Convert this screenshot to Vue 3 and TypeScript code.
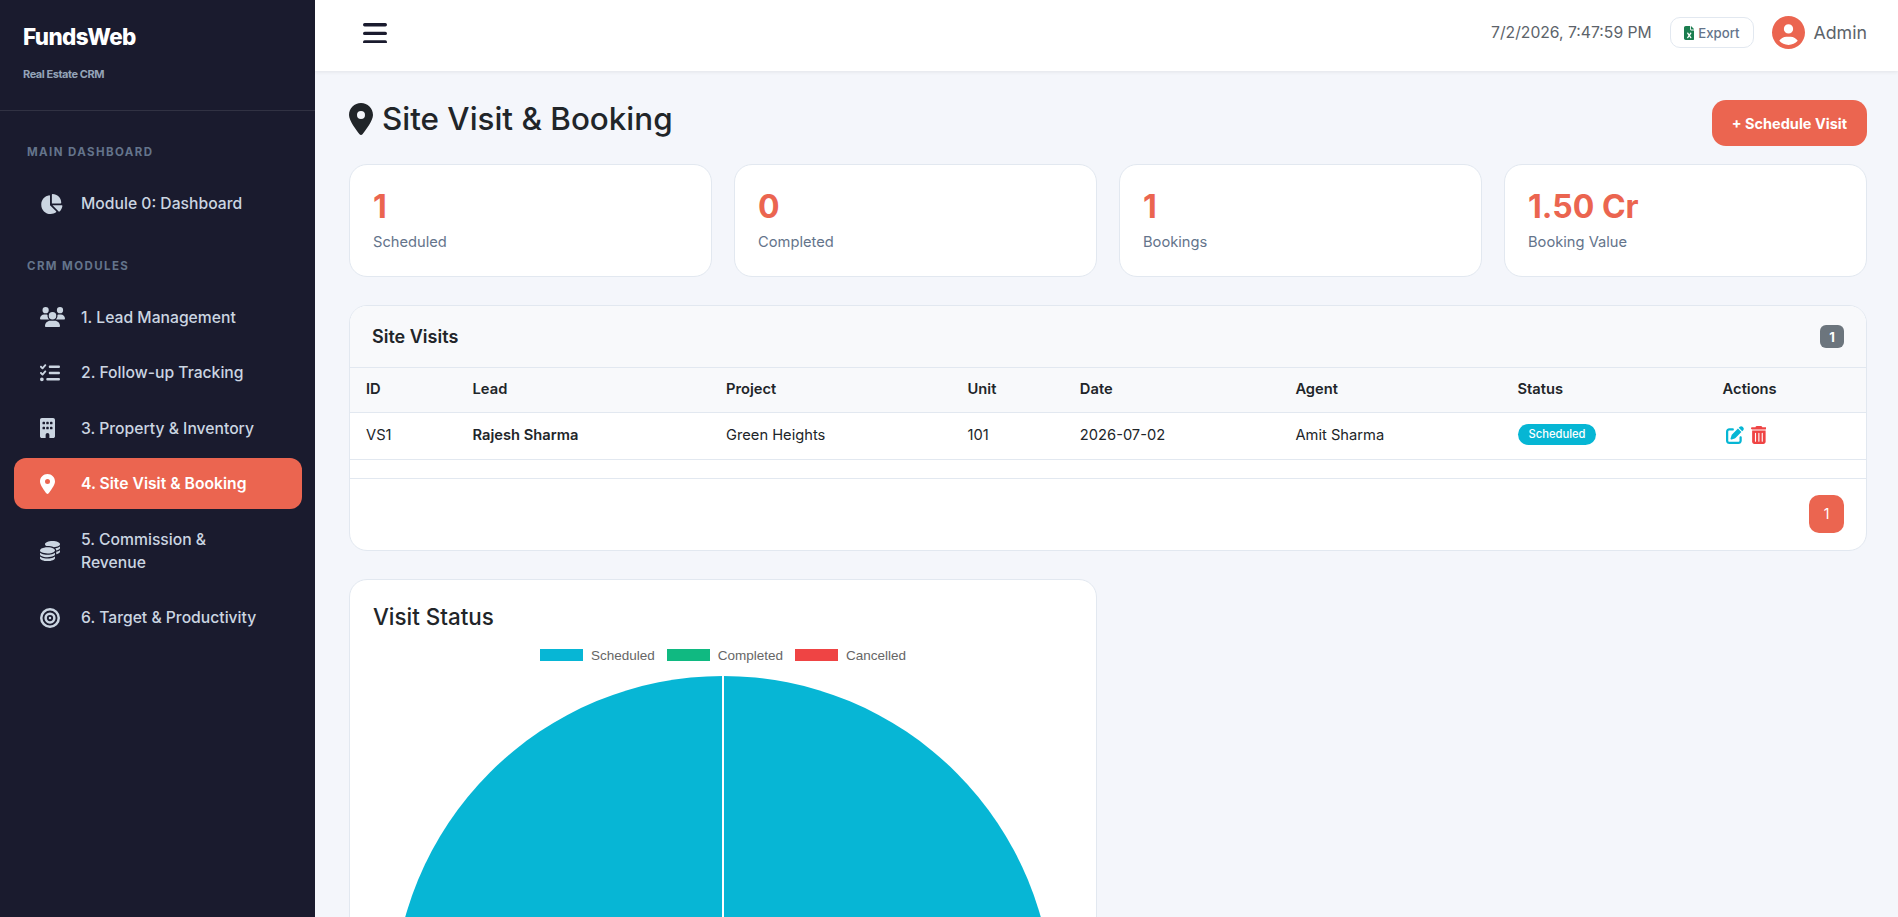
<template>
  <div class="app">
    <aside class="sidebar">
      <div class="brand">
        <div class="brand-name">FundsWeb</div>
        <div class="brand-sub">Real Estate CRM</div>
      </div>
      <nav class="nav">
        <template v-for="group in navGroups" :key="group.label">
          <div class="nav-label">{{ group.label }}</div>
          <a v-for="item in group.items" :key="item.text" class="nav-item" :class="{ active: item.active }">
            <span class="nav-icon">
              <svg :viewBox="`0 0 ${icons[item.icon].w} 512`" height="20" fill="currentColor"><path :d="icons[item.icon].d" /></svg>
            </span>
            <span class="nav-text">{{ item.text }}</span>
          </a>
        </template>
      </nav>
    </aside>

    <div class="main">
      <header class="topbar">
        <button class="menu-btn" aria-label="Toggle menu">
          <svg viewBox="0 0 24 20" width="24" height="20" fill="none" stroke="currentColor" stroke-width="3.4" stroke-linecap="round">
            <path d="M1.7 1.8h20.6M1.7 10.4h20.6M1.7 19h20.6" />
          </svg>
        </button>
        <div class="topbar-right">
          <span class="clock">7/2/2026, 7:47:59 PM</span>
          <button class="export-btn">
            <svg :viewBox="`0 0 ${icons.excel.w} 512`" height="14" fill="#1b7d4f"><path :d="icons.excel.d" /></svg>
            Export
          </button>
          <svg class="avatar" :viewBox="`0 0 ${icons.user.w} 512`" width="33" height="33" fill="#eb6550"><path :d="icons.user.d" /></svg>
          <span class="admin">Admin</span>
        </div>
      </header>

      <main class="content">
        <div class="page-head">
          <h2>
            <svg :viewBox="`0 0 ${icons.pin.w} 512`" height="32" fill="currentColor"><path :d="icons.pin.d" /></svg>
            Site Visit &amp; Booking
          </h2>
          <button class="primary-btn">+ Schedule Visit</button>
        </div>

        <div class="stats">
          <div v-for="stat in stats" :key="stat.label" class="stat-card">
            <div class="stat-value">{{ stat.value }}</div>
            <div class="stat-label">{{ stat.label }}</div>
          </div>
        </div>

        <section class="table-card">
          <div class="table-head">
            <h5>Site Visits</h5>
            <span class="count">1</span>
          </div>
          <table>
            <colgroup>
              <col v-for="w in colWidths" :key="w" :style="{ width: w + '%' }" />
            </colgroup>
            <thead>
              <tr>
                <th v-for="col in columns" :key="col">{{ col }}</th>
              </tr>
            </thead>
            <tbody>
              <tr>
                <td>VS1</td>
                <td><strong>Rajesh Sharma</strong></td>
                <td>Green Heights</td>
                <td>101</td>
                <td>2026-07-02</td>
                <td>Amit Sharma</td>
                <td><span class="pill">Scheduled</span></td>
                <td>
                  <span class="actions">
                    <svg :viewBox="`0 0 ${icons.edit.w} 512`" height="18" fill="#06b6d4"><path :d="icons.edit.d" /></svg>
                    <svg :viewBox="`0 0 ${icons.trash.w} 512`" height="18" fill="#ef4444"><path :d="icons.trash.d" /></svg>
                  </span>
                </td>
              </tr>
            </tbody>
          </table>
          <div class="table-foot">
            <span class="page-num">1</span>
          </div>
        </section>

        <div class="charts">
          <section class="chart-card">
            <h4>Visit Status</h4>
            <div class="legend">
              <span v-for="entry in legend" :key="entry.label" class="legend-entry">
                <i :style="{ background: entry.color }"></i>{{ entry.label }}
              </span>
            </div>
            <svg class="pie" viewBox="0 0 700 662" width="700" height="662">
              <circle cx="350" cy="331" r="330" fill="#07b6d5" />
              <line x1="350" y1="0" x2="350" y2="331" stroke="#fff" stroke-width="2" />
            </svg>
          </section>
        </div>
      </main>
    </div>
  </div>
</template>

<script setup lang="ts">
interface Icon {
  w: number
  d: string
}

const icons: Record<string, Icon> = {
  pie: {
    w: 576,
    d: 'M304 240V16.6c0-9 7-16.6 16-16.6C443.7 0 544 100.3 544 224c0 9-7.6 16-16.6 16H304zM32 272C32 150.7 122.1 50.3 239 34.3c9.2-1.3 17 6.1 17 15.4V288L412.5 444.5c6.7 6.7 6.2 17.7-1.5 23.1C371.8 495.6 323.8 512 272 512C139.5 512 32 404.6 32 272zm526.4 16c9.3 0 16.6 7.8 15.4 17c-7.7 55.9-34.6 105.6-73.9 142.3c-6 5.6-15.4 5.2-21.2-.7L320 288H558.4z',
  },
  users: {
    w: 640,
    d: 'M144 0a80 80 0 1 1 0 160A80 80 0 1 1 144 0zM512 0a80 80 0 1 1 0 160A80 80 0 1 1 512 0zM0 298.7C0 239.8 47.8 192 106.7 192h42.7c15.9 0 31 3.5 44.6 9.7c-1.3 7.2-1.9 14.7-1.9 22.3c0 38.2 16.8 72.5 43.3 96c-.2 0-.4 0-.7 0H21.3C9.6 320 0 310.4 0 298.7zM405.3 320c-.2 0-.4 0-.7 0c26.6-23.5 43.3-57.8 43.3-96c0-7.6-.7-15-1.9-22.3c13.6-6.3 28.7-9.7 44.6-9.7h42.7C592.2 192 640 239.8 640 298.7c0 11.8-9.6 21.3-21.3 21.3H405.3zM224 224a96 96 0 1 1 192 0 96 96 0 1 1 -192 0zM128 485.3C128 411.7 187.7 352 261.3 352H378.7C452.3 352 512 411.7 512 485.3c0 14.7-11.9 26.7-26.7 26.7H154.7c-14.7 0-26.7-11.9-26.7-26.7z',
  },
  tasks: {
    w: 512,
    d: 'M152.1 38.2c9.9 8.9 10.7 24 1.8 33.9l-72 80c-4.4 4.9-10.6 7.8-17.2 7.9s-12.9-2.4-17.6-7L7 113C-2.3 103.6-2.3 88.4 7 79s24.6-9.4 33.9 0l22.1 22.1 55.1-61.2c8.9-9.9 24-10.7 33.9-1.8zm0 160c9.9 8.9 10.7 24 1.8 33.9l-72 80c-4.4 4.9-10.6 7.8-17.2 7.9s-12.9-2.4-17.6-7L7 273c-9.4-9.4-9.4-24.6 0-33.9s24.6-9.4 33.9 0l22.1 22.1 55.1-61.2c8.9-9.9 24-10.7 33.9-1.8zM224 96c0-17.7 14.3-32 32-32H480c17.7 0 32 14.3 32 32s-14.3 32-32 32H256c-17.7 0-32-14.3-32-32zm0 160c0-17.7 14.3-32 32-32H480c17.7 0 32 14.3 32 32s-14.3 32-32 32H256c-17.7 0-32-14.3-32-32zM160 416c0-17.7 14.3-32 32-32H480c17.7 0 32 14.3 32 32s-14.3 32-32 32H192c-17.7 0-32-14.3-32-32zM48 368a48 48 0 1 1 0 96 48 48 0 1 1 0-96z',
  },
  building: {
    w: 384,
    d: 'M48 0C21.5 0 0 21.5 0 48V464c0 26.5 21.5 48 48 48h96V432c0-26.5 21.5-48 48-48s48 21.5 48 48v80h96c26.5 0 48-21.5 48-48V48c0-26.5-21.5-48-48-48H48zM64 240c0-8.8 7.2-16 16-16h32c8.8 0 16 7.2 16 16v32c0 8.8-7.2 16-16 16H80c-8.8 0-16-7.2-16-16V240zm112-16h32c8.8 0 16 7.2 16 16v32c0 8.8-7.2 16-16 16H176c-8.8 0-16-7.2-16-16V240c0-8.8 7.2-16 16-16zm80 16c0-8.8 7.2-16 16-16h32c8.8 0 16 7.2 16 16v32c0 8.8-7.2 16-16 16H272c-8.8 0-16-7.2-16-16V240zM80 96h32c8.8 0 16 7.2 16 16v32c0 8.8-7.2 16-16 16H80c-8.8 0-16-7.2-16-16V112c0-8.8 7.2-16 16-16zm80 16c0-8.8 7.2-16 16-16h32c8.8 0 16 7.2 16 16v32c0 8.8-7.2 16-16 16H176c-8.8 0-16-7.2-16-16V112zM272 96h32c8.8 0 16 7.2 16 16v32c0 8.8-7.2 16-16 16H272c-8.8 0-16-7.2-16-16V112c0-8.8 7.2-16 16-16z',
  },
  pin: {
    w: 384,
    d: 'M215.7 499.2C267 435 384 279.4 384 192C384 86 298 0 192 0S0 86 0 192c0 87.4 117 243 168.3 307.2c12.3 15.3 35.1 15.3 47.4 0zM192 128a64 64 0 1 1 0 128 64 64 0 1 1 0-128z',
  },
  coins: {
    w: 512,
    d: 'M512 80c0 18-14.3 34.6-38.4 48c-29.1 16.1-72.5 27.5-122.3 30.9c-3.7-1.8-7.4-3.5-11.3-5C300.6 137.4 248.2 128 192 128c-8.3 0-16.4 .2-24.5 .6l-1.1-.6C142.3 114.6 128 98 128 80c0-44.2 86-80 192-80S512 35.8 512 80zM160.7 161.1c10.2-.7 20.7-1.1 31.3-1.1c62.2 0 117.4 12.3 152.5 31.4C369.3 204.9 384 221.7 384 240c0 4-.7 7.9-2.1 11.7c-4.6 13.2-17 25.3-35 35.5c0 0 0 0 0 0c-.1 .1-.3 .1-.4 .2l0 0 0 0c-.3 .2-.6 .3-.9 .5c-35 19.4-90.8 32-153.6 32c-59.6 0-112.9-11.3-148.2-29.1c-1.9-.9-3.7-1.9-5.5-2.9C14.3 274.6 0 258 0 240c0-34.8 53.4-64.5 128-75.4c10.5-1.5 21.4-2.7 32.7-3.5zM416 240c0-21.9-10.6-39.9-24.1-53.4c28.3-4.4 54.2-11.4 76.2-20.5c16.3-6.8 31.5-15.2 43.9-25.5V176c0 19.3-16.5 37.1-43.8 50.9c-14.6 7.4-32.4 13.7-52.4 18.5c.1-1.8 .2-3.5 .2-5.3zm-32 96c0 18-14.3 34.6-38.4 48c-1.8 1-3.6 1.9-5.5 2.9C304.9 404.7 251.6 416 192 416c-62.8 0-118.6-12.6-153.6-32C14.3 370.6 0 354 0 336V300.6c12.5 10.3 27.6 18.7 43.9 25.5C83.4 342.6 135.8 352 192 352s108.6-9.4 148.1-25.9c7.8-3.2 15.3-6.9 22.4-10.9c6.1-3.4 11.8-7.2 17.2-11.2c1.5-1.1 2.9-2.3 4.3-3.4V304v5.7V336zm32 0V304 278.1c19-4.2 36.5-9.5 52.1-16c16.3-6.8 31.5-15.2 43.9-25.5V272c0 10.5-5 21-14.9 30.9c-16.3 16.3-45 29.7-81.3 38.4c.1-1.7 .2-3.5 .2-5.3zM192 448c56.2 0 108.6-9.4 148.1-25.9c16.3-6.8 31.5-15.2 43.9-25.5V432c0 44.2-86 80-192 80S0 476.2 0 432V396.6c12.5 10.3 27.6 18.7 43.9 25.5C83.4 438.6 135.8 448 192 448z',
  },
  target: {
    w: 512,
    d: 'M448 256A192 192 0 1 0 64 256a192 192 0 1 0 384 0zM0 256a256 256 0 1 1 512 0A256 256 0 1 1 0 256zm256 80a80 80 0 1 0 0-160 80 80 0 1 0 0 160zm0-224a144 144 0 1 1 0 288 144 144 0 1 1 0-288zM224 256a32 32 0 1 1 64 0 32 32 0 1 1 -64 0z',
  },
  edit: {
    w: 512,
    d: 'M471.6 21.7c-21.9-21.9-57.3-21.9-79.2 0L362.3 51.7l97.9 97.9 30.1-30.1c21.9-21.9 21.9-57.3 0-79.2L471.6 21.7zm-299.2 220c-6.1 6.1-10.8 13.6-13.5 21.9l-29.6 88.8c-2.9 8.6-.6 18.1 5.8 24.6s15.9 8.7 24.6 5.8l88.8-29.6c8.2-2.7 15.7-7.4 21.9-13.5L437.7 172.3 339.7 74.3 172.4 241.7zM96 64C43 64 0 107 0 160V416c0 53 43 96 96 96H352c53 0 96-43 96-96V320c0-17.7-14.3-32-32-32s-32 14.3-32 32v96c0 17.7-14.3 32-32 32H96c-17.7 0-32-14.3-32-32V160c0-17.7 14.3-32 32-32h96c17.7 0 32-14.3 32-32s-14.3-32-32-32H96z',
  },
  trash: {
    w: 448,
    d: 'M135.2 17.7C140.6 6.8 151.7 0 163.8 0H284.2c12.1 0 23.2 6.8 28.6 17.7L320 32h96c17.7 0 32 14.3 32 32s-14.3 32-32 32H32C14.3 96 0 81.7 0 64S14.3 32 32 32h96l7.2-14.3zM32 128H416V448c0 35.3-28.7 64-64 64H96c-35.3 0-64-28.7-64-64V128zm96 64c-8.8 0-16 7.2-16 16V432c0 8.8 7.2 16 16 16s16-7.2 16-16V208c0-8.8-7.2-16-16-16zm96 0c-8.8 0-16 7.2-16 16V432c0 8.8 7.2 16 16 16s16-7.2 16-16V208c0-8.8-7.2-16-16-16zm96 0c-8.8 0-16 7.2-16 16V432c0 8.8 7.2 16 16 16s16-7.2 16-16V208c0-8.8-7.2-16-16-16z',
  },
  user: {
    w: 512,
    d: 'M399 384.2C376.9 345.8 335.4 320 288 320H224c-47.4 0-88.9 25.8-111 64.2c35.2 39.2 86.2 63.8 143 63.8s107.8-24.7 143-63.8zM0 256a256 256 0 1 1 512 0A256 256 0 1 1 0 256zm256 16a72 72 0 1 0 0-144 72 72 0 1 0 0 144z',
  },
  excel: {
    w: 384,
    d: 'M64 0C28.7 0 0 28.7 0 64V448c0 35.3 28.7 64 64 64H320c35.3 0 64-28.7 64-64V160H256c-17.7 0-32-14.3-32-32V0H64zM256 0V128H384L256 0zM155.7 250.2L192 302.1l36.3-51.9c7.6-10.9 22.6-13.5 33.4-5.9s13.5 22.6 5.9 33.4L221.3 344l46.4 66.2c7.6 10.9 5 25.8-5.9 33.4s-25.8 5-33.4-5.9L192 385.8l-36.3 51.9c-7.6 10.9-22.6 13.5-33.4 5.9s-13.5-22.6-5.9-33.4L162.7 344l-46.4-66.2c-7.6-10.9-5-25.8 5.9-33.4s25.8-5 33.4 5.9z',
  },
}

const navGroups = [
  {
    label: 'Main Dashboard',
    items: [{ text: 'Module 0: Dashboard', icon: 'pie' }],
  },
  {
    label: 'CRM Modules',
    items: [
      { text: '1. Lead Management', icon: 'users' },
      { text: '2. Follow-up Tracking', icon: 'tasks' },
      { text: '3. Property & Inventory', icon: 'building' },
      { text: '4. Site Visit & Booking', icon: 'pin', active: true },
      { text: '5. Commission & Revenue', icon: 'coins' },
      { text: '6. Target & Productivity', icon: 'target' },
    ],
  },
]

const stats = [
  { value: '1', label: 'Scheduled' },
  { value: '0', label: 'Completed' },
  { value: '1', label: 'Bookings' },
  { value: '1.50 Cr', label: 'Booking Value' },
]

const columns = ['ID', 'Lead', 'Project', 'Unit', 'Date', 'Agent', 'Status', 'Actions']
const colWidths = [7.03, 16.72, 15.93, 7.41, 14.22, 14.65, 13.53, 10.51]

const legend = [
  { label: 'Scheduled', color: '#07b6d5' },
  { label: 'Completed', color: '#10b981' },
  { label: 'Cancelled', color: '#ef4444' },
]
</script>

<style scoped>
.app {
  display: flex;
  height: 100vh;
  overflow: hidden;
  font-family: Inter, "Liberation Sans", sans-serif;
  color: #212529;
  background: #f4f6fb;
}

.sidebar {
  flex: none;
  width: 315px;
  background: #1a1b2e;
  color: #cbd5e1;
}

.brand {
  height: 111px;
  padding: 24px 23px 0;
  box-sizing: border-box;
  border-bottom: 1px solid rgba(255, 255, 255, 0.1);
}

.brand-name {
  font-size: 22.4px;
  line-height: 26px;
  font-weight: 800;
  letter-spacing: -0.6px;
  color: #fff;
}

.brand-sub {
  margin-top: 17px;
  font-size: 11px;
  line-height: 14px;
  font-weight: 700;
  letter-spacing: -0.45px;
  color: #94a3b8;
}

.nav {
  padding: 9px 13px 0 14px;
}

.nav-label {
  padding: 24px 13px 17px;
  font-size: 11.5px;
  line-height: 17px;
  font-weight: 700;
  letter-spacing: 1.4px;
  text-transform: uppercase;
  color: #64748b;
}

.nav-item {
  display: flex;
  align-items: center;
  margin-bottom: 4.5px;
  padding: 14px 36px 14px 26px;
  font-size: 15.7px;
  line-height: 23px;
  font-weight: 500;
  border-radius: 12px;
}

.nav-item.active {
  background: #eb6550;
  color: #fff;
  font-weight: 600;
}

.nav-icon {
  flex: none;
  display: flex;
  width: 41px;
}

.main {
  flex: 1;
  min-width: 0;
  display: flex;
  flex-direction: column;
}

.topbar {
  flex: none;
  height: 71px;
  box-sizing: border-box;
  display: flex;
  align-items: center;
  justify-content: space-between;
  padding: 0 31px 6px 48px;
  background: #fff;
  box-shadow: 0 1px 4px rgba(0, 0, 0, 0.08);
  z-index: 1;
}

.menu-btn {
  display: flex;
  padding: 0;
  border: 0;
  background: none;
  color: #1a1b2e;
}

.topbar-right {
  display: flex;
  align-items: center;
}

.clock {
  font-size: 15.7px;
  color: #5c636a;
}

.export-btn {
  display: flex;
  align-items: center;
  gap: 4px;
  height: 31px;
  margin: 0 18px 0 18px;
  padding: 0 14px 0 13px;
  font: 500 13.2px Inter, sans-serif;
  color: #64748b;
  background: #fff;
  border: 1px solid #e2e8f0;
  border-radius: 10px;
}

.admin {
  margin-left: 8px;
  font-size: 17.8px;
  color: #5c636a;
}

.content {
  flex: 1;
  min-height: 0;
  overflow: hidden;
  padding: 29px 31px 0 34px;
}

.page-head {
  display: flex;
  align-items: center;
  justify-content: space-between;
  margin-bottom: 18px;
}

h2 {
  display: flex;
  align-items: center;
  gap: 9px;
  margin: 0 0 8px;
  font-size: 31.4px;
  line-height: 38px;
  font-weight: 500;
}

.primary-btn {
  height: 46px;
  padding: 0 20px;
  font: 700 14.5px Inter, sans-serif;
  color: #fff;
  background: #eb6550;
  border: 0;
  border-radius: 14px;
}

.stats {
  display: grid;
  grid-template-columns: repeat(4, 1fr);
  gap: 22px;
  margin-bottom: 28px;
}

.stat-card {
  height: 113px;
  box-sizing: border-box;
  padding: 22px 23px 0;
  background: #fff;
  border: 1px solid #e2e8f0;
  border-radius: 18px;
}

.stat-value {
  font-size: 32px;
  line-height: 39px;
  font-weight: 700;
  color: #eb6550;
}

.stat-label {
  margin-top: 5px;
  font-size: 14.7px;
  line-height: 22px;
  color: #64748b;
}

.table-card {
  background: #fff;
  border: 1px solid #e2e8f0;
  border-radius: 18px;
  overflow: hidden;
  margin-bottom: 28px;
}

.table-head {
  height: 61px;
  display: flex;
  align-items: center;
  justify-content: space-between;
  padding: 0 22px;
  background: #f8f9fb;
  border-bottom: 1px solid #e2e8f0;
}

h5 {
  margin: 0;
  font-size: 18px;
  font-weight: 600;
}

.count {
  width: 24px;
  height: 23px;
  display: flex;
  align-items: center;
  justify-content: center;
  font-size: 13px;
  font-weight: 700;
  color: #fff;
  background: #6c757d;
  border-radius: 6px;
}

table {
  width: 100%;
  table-layout: fixed;
  border-collapse: collapse;
  font-size: 14.7px;
}

th {
  height: 44px;
  padding: 0 16px 1px;
  box-sizing: border-box;
  text-align: left;
  font-weight: 600;
  background: #f8f9fb;
  border-bottom: 1px solid #e2e8f0;
}

td {
  height: 47px;
  padding: 0 16px 2px;
  box-sizing: border-box;
  border-bottom: 1px solid #e2e8f0;
}

td strong {
  font-weight: 600;
}

.pill {
  display: inline-block;
  padding: 0 11px;
  font-size: 11.2px;
  line-height: 21px;
  font-weight: 500;
  color: #fff;
  background: #06b6d4;
  border-radius: 11px;
  vertical-align: middle;
}

.actions {
  display: flex;
  gap: 7px;
  padding-left: 3px;
}

.table-foot {
  display: flex;
  justify-content: flex-end;
  margin-top: 18px;
  padding: 16px 22px 17px;
  border-top: 1px solid #e2e8f0;
}

.page-num {
  width: 35px;
  height: 38px;
  display: flex;
  align-items: center;
  justify-content: center;
  font-size: 14px;
  color: #fff;
  background: #eb6550;
  border-radius: 10px;
}

.charts {
  display: grid;
  grid-template-columns: repeat(2, 1fr);
  gap: 22px;
}

.chart-card {
  padding: 23px 23px;
  background: #fff;
  border: 1px solid #e2e8f0;
  border-radius: 18px;
}

h4 {
  margin: 0;
  font-size: 22.4px;
  line-height: 27px;
  font-weight: 500;
}

.legend {
  display: flex;
  justify-content: center;
  gap: 12px;
  margin-top: 18px;
  height: 15px;
  font-family: "Liberation Sans", Arial, sans-serif;
  font-size: 13.5px;
  line-height: 15px;
  color: #666;
}

.legend-entry {
  display: flex;
  align-items: center;
}

.legend-entry i {
  width: 43px;
  height: 12px;
  margin-right: 8px;
}

.pie {
  display: block;
  margin-top: 12px;
}
</style>

<style>
html,
body {
  margin: 0;
  overflow: hidden;
}
</style>
